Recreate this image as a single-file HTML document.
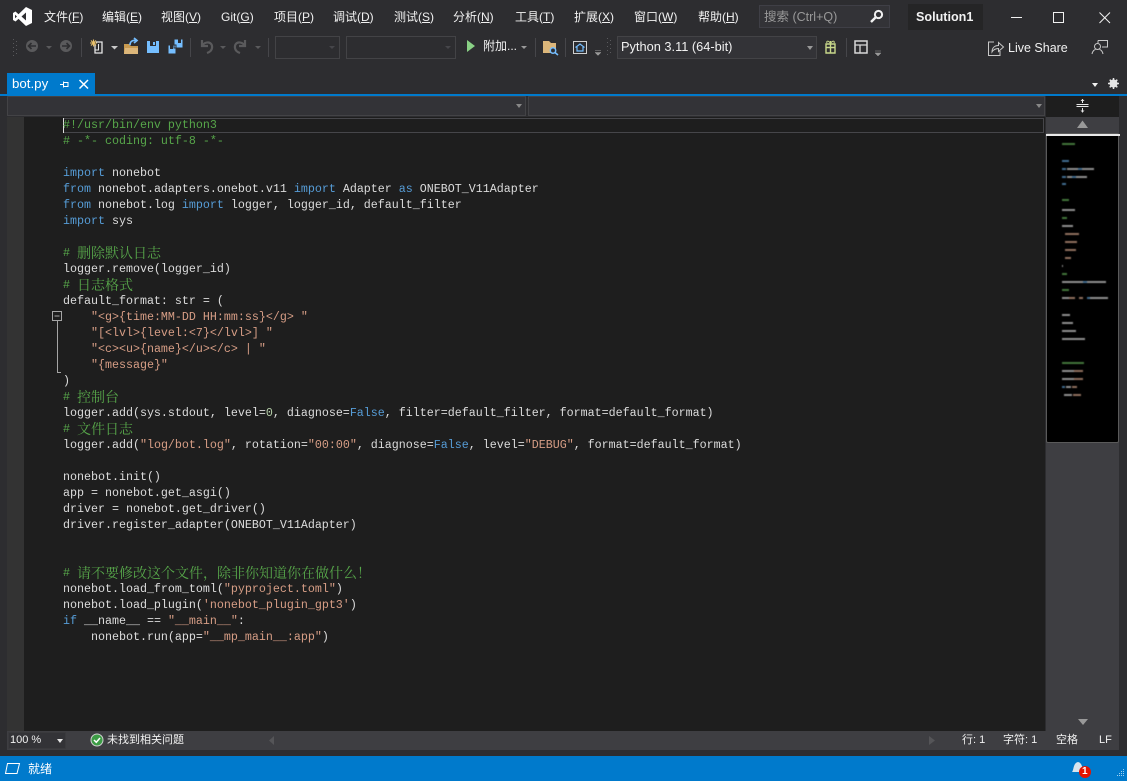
<!DOCTYPE html>
<html lang="zh"><head><meta charset="utf-8"><title>bot.py</title>
<style>
html,body{margin:0;padding:0;width:1127px;height:781px;overflow:hidden;background:#2d2d30}
body{position:relative;font-family:"Liberation Sans","Noto Sans CJK SC",sans-serif;font-size:12px;color:#f1f1f1}
.a{position:absolute;white-space:pre}
.m{position:absolute;top:8px;height:18px;line-height:18px;white-space:pre;font-size:12px;color:#f1f1f1}
.b{position:absolute;box-sizing:border-box}
.f{font-size:11px}
#code{position:absolute;left:63px;top:117px;margin:0;font-family:"Liberation Mono","Noto Serif CJK SC",monospace;font-size:11.67px;line-height:16px;color:#dcdcdc}
#code div{height:16px;white-space:pre}
#code i{font-style:normal;font-family:"Noto Serif CJK SC","Noto Sans CJK SC",serif;font-size:14px;line-height:16px;display:inline-block;height:16px;vertical-align:top}
.c{color:#57a64a}.k{color:#569cd6}.s{color:#d69d85}.n{color:#b5cea8}
svg{position:absolute;display:block;overflow:visible}
.arr{position:absolute;width:0;height:0;border-left:3.5px solid transparent;border-right:3.5px solid transparent;border-top:4px solid #999}
</style></head><body>

<!-- title bar -->
<svg style="left:0;top:0" width="40" height="32"><path fill="#fff" fill-rule="evenodd" d="M26 7L32 10V23L26 26L18.5 18.9L15.5 21.5L13 20V13L15.5 11.5L18.5 14.2ZM26 12.5L21.5 16.5L26 20.5ZM15 14.7V18.3L17 16.5Z"/></svg>
<div class="m" style="left:44px">文件(<u>F</u>)</div>
<div class="m" style="left:102px">编辑(<u>E</u>)</div>
<div class="m" style="left:161px">视图(<u>V</u>)</div>
<div class="m" style="left:221px">Git(<u>G</u>)</div>
<div class="m" style="left:274px">项目(<u>P</u>)</div>
<div class="m" style="left:333px">调试(<u>D</u>)</div>
<div class="m" style="left:394px">测试(<u>S</u>)</div>
<div class="m" style="left:453px">分析(<u>N</u>)</div>
<div class="m" style="left:515px">工具(<u>T</u>)</div>
<div class="m" style="left:574px">扩展(<u>X</u>)</div>
<div class="m" style="left:634px">窗口(<u>W</u>)</div>
<div class="m" style="left:698px">帮助(<u>H</u>)</div>

<div class="b" style="left:759px;top:5px;width:131px;height:23px;background:#333337;border:1px solid #3f3f46"></div>
<div class="a" style="left:764px;top:8px;line-height:18px;color:#999;font-size:12.5px">搜索 (Ctrl+Q)</div>
<svg style="left:869px;top:9px" width="16" height="15"><circle cx="9.5" cy="5.5" r="3.6" fill="none" stroke="#f1f1f1" stroke-width="2"/><path d="M7 8L2 13" stroke="#f1f1f1" stroke-width="2.4"/></svg>
<div class="b" style="left:908px;top:4px;width:75px;height:26px;background:#252526"></div>
<div class="a" style="left:916px;top:8px;line-height:18px;font-weight:bold;color:#f1f1f1;font-size:12.6px">Solution1</div>
<svg style="left:1000px;top:0" width="127" height="32" fill="none" stroke="#f1f1f1"><path d="M11 17.5H22"/><rect x="53.5" y="12.5" width="10" height="10"/><path d="M99.5 12.5L110 23M110 12.5L99.5 23"/></svg>

<!-- toolbar -->
<svg style="left:0;top:32px" width="640" height="30">
 <g fill="#5a5a5d"><rect x="13" y="7" width="1" height="1"/><rect x="16" y="9" width="1" height="1"/><rect x="13" y="11" width="1" height="1"/><rect x="16" y="13" width="1" height="1"/><rect x="13" y="15" width="1" height="1"/><rect x="16" y="17" width="1" height="1"/><rect x="13" y="19" width="1" height="1"/><rect x="16" y="21" width="1" height="1"/><rect x="13" y="23" width="1" height="1"/></g>
 <circle cx="32" cy="14" r="6" fill="#5a5a5c"/><path d="M36 14H29M31.5 11L28.5 14L31.5 17" stroke="#2d2d30" stroke-width="1.6" fill="none"/>
 <path d="M46 14H52L49 17Z" fill="#5a5a5c"/>
 <circle cx="66" cy="14" r="6" fill="#5a5a5c"/><path d="M62 14H69M66.5 11L69.5 14L66.5 17" stroke="#2d2d30" stroke-width="1.6" fill="none"/>
 <path d="M81.5 6V25" stroke="#46464a"/>
 <path d="M96 10H102V21H95V12" fill="none" stroke="#e6e6e6" stroke-width="1.3"/><path d="M98.500 12V18H95" fill="none" stroke="#e6e6e6"/>
 <path d="M90 11H97M93.500 7.500V14.500M91 8.500L96 13.500M96 8.500L91 13.500" stroke="#e8c06a" stroke-width="1.1"/>
 <path d="M111 14H118L114.500 17.500Z" fill="#c8c8c8"/>
 <path d="M124 22V12H129L131 14H138V22Z" fill="#c89a50"/><path d="M125 16H138V22H124Z" fill="#dcb67a"/>
 <path d="M130 13C130 9 133 8 136 8.500M134 6L137 8.500L134 11" fill="none" stroke="#75beff" stroke-width="1.7"/>
 <path d="M147 9H159V21H147Z" fill="#75beff"/><rect x="150" y="9" width="6" height="5" fill="#2d2d30"/><rect x="153" y="10" width="2" height="3" fill="#75beff"/>
 <path d="M174 7H183V16H174ZM168 13H176V22H168Z" fill="#75beff" stroke="#2d2d30"/><rect x="178" y="7" width="3" height="4" fill="#2d2d30"/><rect x="170" y="13" width="3" height="4" fill="#2d2d30"/>
 <path d="M190.500 6V25" stroke="#46464a"/>
 <path d="M202 8V14H208M202 14C205 8.500 213 9.500 212 16C211.700 18.500 210 20 207 21" fill="none" stroke="#5a5a5c" stroke-width="2.2"/>
 <path d="M220 14H226L223 17Z" fill="#5a5a5c"/>
 <path d="M245 8V14H239M245 14C242 8.500 234 9.500 235 16C235.300 18.500 237 20 240 21" fill="none" stroke="#5a5a5c" stroke-width="2.2"/>
 <path d="M255 14H261L258 17Z" fill="#5a5a5c"/>
 <path d="M268.500 6V25" stroke="#46464a"/>
 <rect x="275.500" y="4.500" width="64" height="22" fill="#2d2d30" stroke="#434346"/><path d="M329 14H335L332 17Z" fill="#46464a"/>
 <rect x="346.500" y="4.500" width="109" height="22" fill="#2d2d30" stroke="#434346"/><path d="M445 14H451L448 17Z" fill="#46464a"/>
 <path d="M467 8L475 14L467 20Z" fill="#89d185"/>
 <path d="M521 14H527L524 17Z" fill="#999"/>
 <path d="M535.500 6V25" stroke="#46464a"/>
 <path d="M543 9H549L551 11H556V21H543Z" fill="#dcb67a"/><circle cx="553" cy="18.500" r="2.700" fill="#2d2d30" stroke="#75beff" stroke-width="1.5"/><path d="M555 20.500L558 23" stroke="#75beff" stroke-width="1.5"/>
 <path d="M565.500 6V25" stroke="#46464a"/>
 <rect x="573.500" y="9.500" width="13" height="12" fill="none" stroke="#d0d0d0"/><path d="M575.500 15.500L580 12L584.500 15.500M577 15V19H583V15" fill="none" stroke="#75beff" stroke-width="1.2"/>
 <path d="M595 18.500H601M595 20.500H601L598 23.500Z" fill="#999" stroke="#999" stroke-width=".5"/>
 <g fill="#5a5a5d"><rect x="607" y="6" width="1" height="1"/><rect x="610" y="8" width="1" height="1"/><rect x="607" y="10" width="1" height="1"/><rect x="610" y="12" width="1" height="1"/><rect x="607" y="14" width="1" height="1"/><rect x="610" y="16" width="1" height="1"/><rect x="607" y="18" width="1" height="1"/><rect x="610" y="20" width="1" height="1"/><rect x="607" y="22" width="1" height="1"/></g>
</svg>
<div class="a" style="left:483px;top:37px;line-height:18px;color:#f1f1f1">附加...</div>
<div class="b" style="left:617px;top:36px;width:200px;height:23px;background:#333337;border:1px solid #434346"></div>
<div class="a" style="left:621px;top:38px;line-height:18px;color:#f1f1f1;font-size:12.8px">Python 3.11 (64-bit)</div>
<div class="arr" style="left:807px;top:46px"></div>
<svg style="left:820px;top:32px" width="70" height="30">
 <path d="M6 12H15V21H6ZM6 15.500H15M10.500 9V21" fill="none" stroke="#c8d88a" stroke-width="1.400"/><path d="M10.500 11.500C8 8 6 9 7 11M10.500 11.500C13 8 15 9 14 11" fill="none" stroke="#c8d88a"/>
 <path d="M26.500 6V25" stroke="#46464a"/>
 <rect x="35" y="9" width="12" height="12" fill="none" stroke="#d8d8d8" stroke-width="1.500"/><path d="M35 13H47M40 13V21" stroke="#d8d8d8" stroke-width="1.300"/>
 <path d="M55 19H61M55 21H61L58 24Z" fill="#999" stroke="#999" stroke-width=".5"/>
</svg>
<svg style="left:985px;top:38px" width="20" height="20" fill="none" stroke="#c8c8c8"><path d="M9 4H3.500V17.500H15V13"/><path d="M7 14C7 9.500 10 7.500 13.500 7.500V4.500L18.500 9L13.500 13.500V10.500C11 10.500 8.500 11.500 7 14Z"/></svg>
<div class="a" style="left:1008px;top:39px;line-height:18px;color:#f1f1f1;font-size:12.5px">Live Share</div>
<svg style="left:1090px;top:38px" width="20" height="20" fill="none" stroke="#c8c8c8"><path d="M8 2.500H17.500V9H12M8 2.500V5"/><circle cx="7.500" cy="8.500" r="3"/><path d="M2 16C2.500 13 4.500 11.500 5.500 11.500M13 16C12.500 13 10.500 11.500 9.500 11.500"/></svg>

<!-- tab row -->
<div class="b" style="left:7px;top:73px;width:88px;height:21px;background:#007acc"></div>
<div class="a" style="left:12px;top:75px;line-height:18px;font-size:13.3px;color:#fff">bot.py</div>
<svg style="left:58px;top:77px" width="36" height="15" fill="none" stroke="#fff"><path d="M2 7.500H5M5.500 4.500V10.500M5.500 5.500H10V9.500H5.500"/><path d="M21.500 3L30 11.500M30 3L21.500 11.500" stroke-width="1.500"/></svg>
<div class="arr" style="left:1092px;top:83px;border-top-color:#f1f1f1"></div>
<svg style="left:1107px;top:77px" width="14" height="14"><circle cx="6.500" cy="6.500" r="3" fill="none" stroke="#e6e6e6" stroke-width="2"/><path d="M6.500 1V12M1 6.500H12M2.700 2.700L10.300 10.300M10.300 2.700L2.700 10.300" stroke="#e6e6e6" stroke-width="1.500"/></svg>
<div class="b" style="left:0;top:94px;width:1127px;height:2px;background:#007acc"></div>

<!-- nav bar -->
<div class="b" style="left:7px;top:96px;width:1120px;height:21px;background:#2d2d30"></div>
<div class="b" style="left:7px;top:96px;width:519px;height:20px;background:#333337;border:1px solid #434346"></div>
<div class="b" style="left:528px;top:96px;width:517px;height:20px;background:#333337;border:1px solid #434346"></div>
<div class="arr" style="left:516px;top:104px;border-top-color:#888"></div>
<div class="arr" style="left:1036px;top:104px;border-top-color:#888"></div>
<div class="b" style="left:1046px;top:96px;width:73px;height:21px;background:#1e1e1e"></div>
<svg style="left:1075px;top:98px" width="16" height="16" stroke="#e6e6e6" fill="#e6e6e6"><path d="M1.500 6.500H13.500M1.500 8.500H13.500" fill="none"/><path d="M7.500 1V5M7.500 10V14.500" fill="none"/><path d="M5.500 3L7.500 1L9.500 3ZM5.500 12.500L7.500 14.500L9.500 12.500Z" stroke="none"/></svg>

<!-- editor -->
<div class="b" style="left:7px;top:117px;width:17px;height:614px;background:#333333"></div>
<div class="b" style="left:24px;top:117px;width:1021px;height:614px;background:#1e1e1e"></div>
<div class="b" style="left:63px;top:118px;width:981px;height:15px;border:1px solid #46464a;border-left:none"></div>
<div class="b" style="left:63px;top:118px;width:1px;height:15px;background:#dcdcdc"></div>

<!-- fold -->
<svg style="left:50px;top:310px" width="14" height="66" fill="none" stroke="#a5a5a5"><rect x="2.500" y="1.500" width="9" height="9"/><path d="M4.500 6H9.500M7.500 11V62.500H11"/></svg>

<div id="code">
<div class="c">#!/usr/bin/env python3</div>
<div class="c"># -*- coding: utf-8 -*-</div>
<div> </div>
<div><span class="k">import</span> nonebot</div>
<div><span class="k">from</span> nonebot.adapters.onebot.v11 <span class="k">import</span> Adapter <span class="k">as</span> ONEBOT_V11Adapter</div>
<div><span class="k">from</span> nonebot.log <span class="k">import</span> logger, logger_id, default_filter</div>
<div><span class="k">import</span> sys</div>
<div> </div>
<div class="c"># <i>删除默认日志</i></div>
<div>logger.remove(logger_id)</div>
<div class="c"># <i>日志格式</i></div>
<div>default_format: str = (</div>
<div>    <span class="s">"&lt;g&gt;{time:MM-DD HH:mm:ss}&lt;/g&gt; "</span></div>
<div>    <span class="s">"[&lt;lvl&gt;{level:&lt;7}&lt;/lvl&gt;] "</span></div>
<div>    <span class="s">"&lt;c&gt;&lt;u&gt;{name}&lt;/u&gt;&lt;/c&gt; | "</span></div>
<div>    <span class="s">"{message}"</span></div>
<div>)</div>
<div class="c"># <i>控制台</i></div>
<div>logger.add(sys.stdout, level=<span class="n">0</span>, diagnose=<span class="k">False</span>, filter=default_filter, format=default_format)</div>
<div class="c"># <i>文件日志</i></div>
<div>logger.add(<span class="s">"log/bot.log"</span>, rotation=<span class="s">"00:00"</span>, diagnose=<span class="k">False</span>, level=<span class="s">"DEBUG"</span>, format=default_format)</div>
<div> </div>
<div>nonebot.init()</div>
<div>app = nonebot.get_asgi()</div>
<div>driver = nonebot.get_driver()</div>
<div>driver.register_adapter(ONEBOT_V11Adapter)</div>
<div> </div>
<div> </div>
<div class="c"># <i>请不要修改这个文件，除非你知道你在做什么！</i></div>
<div>nonebot.load_from_toml(<span class="s">"pyproject.toml"</span>)</div>
<div>nonebot.load_plugin(<span class="s">'nonebot_plugin_gpt3'</span>)</div>
<div><span class="k">if</span> __name__ == <span class="s">"__main__"</span>:</div>
<div>    nonebot.run(app=<span class="s">"__mp_main__:app"</span>)</div>
</div>

<!-- minimap scrollbar -->
<div class="b" style="left:1045px;top:117px;width:74px;height:614px;background:#3e3e42"></div>
<div class="b" style="left:1045px;top:117px;width:1px;height:614px;background:#2d2d30"></div>
<svg style="left:1045px;top:117px" width="74" height="16"><path d="M32 11L37.500 3.500L43 11Z" fill="#999"/></svg>
<svg style="left:1045px;top:715px" width="74" height="16"><path d="M33 4H43L38 10Z" fill="#999"/></svg>
<div class="b" style="left:1046px;top:133px;width:73px;height:310px;background:#000;border:1px solid #5a5a5a;border-radius:2px"></div>
<div class="b" style="left:1046px;top:134px;width:74px;height:2px;background:#e8e8e8"></div>
<svg style="left:0;top:0;filter:blur(.45px)" width="1127" height="781" opacity=".85">
 <g fill="#4d8a45"><rect x="1062" y="143" width="13" height="2"/><rect x="1062" y="199" width="7" height="2"/><rect x="1062" y="217" width="5" height="2"/><rect x="1062" y="273" width="5" height="2"/><rect x="1062" y="289" width="7" height="2"/><rect x="1062" y="362" width="22" height="2"/></g>
 <g fill="#4c7fa8"><rect x="1062" y="160" width="7" height="2"/><rect x="1062" y="168" width="4" height="2"/><rect x="1078" y="168" width="4" height="2"/><rect x="1062" y="176" width="4" height="2"/><rect x="1072" y="176" width="4" height="2"/><rect x="1062" y="183" width="4" height="2"/><rect x="1083" y="281" width="4" height="2"/><rect x="1087" y="297" width="3" height="2"/><rect x="1062" y="386" width="3" height="2"/></g>
 <g fill="#a8a8a8"><rect x="1067" y="168" width="11" height="2"/><rect x="1082" y="168" width="12" height="2"/><rect x="1067" y="176" width="5" height="2"/><rect x="1076" y="176" width="11" height="2"/><rect x="1062" y="209" width="13" height="2"/><rect x="1062" y="225" width="11" height="2"/><rect x="1062" y="265" width="1" height="2"/><rect x="1062" y="281" width="21" height="2"/><rect x="1087" y="281" width="19" height="2"/><rect x="1062" y="297" width="7" height="2"/><rect x="1090" y="297" width="18" height="2"/><rect x="1062" y="314" width="8" height="2"/><rect x="1062" y="322" width="11" height="2"/><rect x="1062" y="330" width="14" height="2"/><rect x="1062" y="338" width="23" height="2"/><rect x="1062" y="370" width="12" height="2"/><rect x="1062" y="378" width="12" height="2"/><rect x="1066" y="386" width="5" height="2"/><rect x="1064" y="394" width="8" height="2"/></g>
 <g fill="#a8826f"><rect x="1065" y="233" width="14" height="2"/><rect x="1065" y="241" width="12" height="2"/><rect x="1065" y="249" width="11" height="2"/><rect x="1065" y="257" width="6" height="2"/><rect x="1069" y="297" width="6" height="2"/><rect x="1079" y="297" width="4" height="2"/><rect x="1074" y="370" width="9" height="2"/><rect x="1074" y="378" width="9" height="2"/><rect x="1072" y="386" width="5" height="2"/><rect x="1073" y="394" width="8" height="2"/></g>
</svg>

<!-- bottom editor bar -->
<div class="b" style="left:7px;top:731px;width:1112px;height:19px;background:#3e3e42"></div>
<div class="b" style="left:8px;top:732px;width:58px;height:17px;background:#333337;border:1px solid #3a3a3d"></div>
<div class="a f" style="left:10px;top:731px;line-height:18px;color:#f1f1f1">100 %</div>
<div class="arr" style="left:57px;top:739px;border-top-color:#e6e6e6"></div>
<svg style="left:90px;top:733px" width="14" height="15"><circle cx="7" cy="7" r="6" fill="#3c9c45" stroke="#d0d0d0"/><path d="M4 7L6.300 9.300L10 5" fill="none" stroke="#fff" stroke-width="1.500"/></svg>
<div class="a f" style="left:107px;top:731px;line-height:18px;color:#f1f1f1">未找到相关问题</div>
<svg style="left:0;top:731px" width="1127" height="19"><path d="M274 5V14L269 9.500Z" fill="#555558"/><path d="M929 5V14L935 9.500Z" fill="#555558"/></svg>
<div class="a f" style="left:962px;top:731px;line-height:18px;color:#f1f1f1">行: 1</div>
<div class="a f" style="left:1003px;top:731px;line-height:18px;color:#f1f1f1">字符: 1</div>
<div class="a f" style="left:1056px;top:731px;line-height:18px;color:#f1f1f1">空格</div>
<div class="a f" style="left:1099px;top:731px;line-height:18px;color:#f1f1f1">LF</div>

<!-- status bar -->
<div class="b" style="left:0;top:756px;width:1127px;height:25px;background:#007acc"></div>
<svg style="left:4px;top:762px" width="18" height="14" fill="none" stroke="#fff"><path d="M3.500 1.500H15.500L13 11.500H1.500Z"/></svg>
<div class="a" style="left:28px;top:760px;line-height:18px;color:#fff">就绪</div>
<svg style="left:1068px;top:759px" width="24" height="22"><path d="M4 13C6 11 5 4 10 3C15 4 14 11 16 13Z" fill="#d8e4ee"/><circle cx="17" cy="13" r="6" fill="#e51400"/></svg>
<div class="a" style="left:1082px;top:765px;line-height:14px;font-size:10px;font-weight:bold;color:#fff">1</div>
<svg style="left:1114px;top:768px" width="12" height="12" fill="#9fd0ef"><rect x="9" y="1" width="1" height="1"/><rect x="7" y="3" width="1" height="1"/><rect x="9" y="3" width="1" height="1"/><rect x="5" y="5" width="1" height="1"/><rect x="7" y="5" width="1" height="1"/><rect x="9" y="5" width="1" height="1"/><rect x="3" y="7" width="1" height="1"/><rect x="5" y="7" width="1" height="1"/><rect x="7" y="7" width="1" height="1"/><rect x="9" y="7" width="1" height="1"/></svg>
</body></html>
